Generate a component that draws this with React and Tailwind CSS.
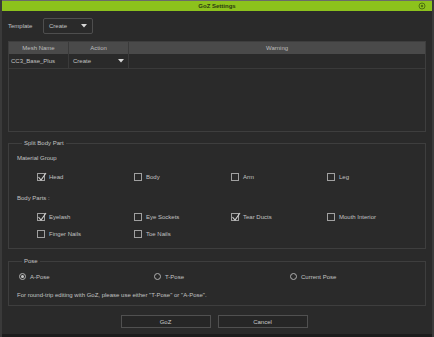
import React from "react";

const Check = ({ checked, label }) => (
  <div className="flex items-center gap-[4px]">
    <div className="relative w-[8px] h-[8px] border border-[#a0a0a0]">
      {checked && (
        <svg className="absolute -top-[2px] -left-[1px]" width="10" height="10" viewBox="0 0 10 10">
          <path d="M1.5 5 L4 8 L9 1" fill="none" stroke="#d0d0d0" strokeWidth="1.1" />
        </svg>
      )}
    </div>
    <span>{label}</span>
  </div>
);

const Radio = ({ checked, label }) => (
  <div className="flex items-center gap-[4px]">
    <div className="w-[7px] h-[7px] rounded-full border border-[#b0b0b0] flex items-center justify-center">
      {checked && <div className="w-[3px] h-[3px] rounded-full bg-[#c8c8c8]" />}
    </div>
    <span>{label}</span>
  </div>
);

const Select = ({ value, className }) => (
  <div className={`flex items-center justify-between ${className}`}>
    <span>{value}</span>
    <svg width="6" height="4" viewBox="0 0 6 4">
      <path d="M0 0 H6 L3 3.5 Z" fill="#d8d8d8" />
    </svg>
  </div>
);

export default function App() {
  return (
    <div
      className="w-[434px] h-[337px] bg-[#2a2a2a] flex flex-col text-[6px] leading-none text-[#c2c2c2] border-x-2 border-[#3a3a3a]"
      style={{ fontFamily: '"Liberation Sans", Arial, sans-serif' }}
    >
      {/* Title bar */}
      <div className="relative h-[11px] bg-[#8cc21c] border-t border-[#6a6a6a] flex items-center justify-center">
        <span className="font-bold text-[#2b3a10]">GoZ Settings</span>
        <svg className="absolute right-[6px] top-[1px]" width="8" height="8" viewBox="0 0 8 8">
          <circle cx="4" cy="4" r="3" fill="none" stroke="#4e7410" strokeWidth="1" />
          <circle cx="4" cy="4" r="1.2" fill="#4e7410" />
        </svg>
      </div>

      <div className="flex-1 flex flex-col px-[6px]">
        {/* Template */}
        <div className="mt-[7px] h-[16px] flex items-center">
          <span className="w-[35px]">Template</span>
          <Select
            value="Create"
            className="w-[50px] h-[16px] border border-[#4e4e4e] rounded-[2px] pl-[5px] pr-[5px]"
          />
        </div>

        {/* Mesh table */}
        <div className="mt-[7px] h-[91px] border border-[#3e3e3e] flex flex-col">
          <div className="h-[12px] bg-[#4a4a4a] grid grid-cols-[60px_60px_1fr] text-[#bdbdbd]">
            <div className="flex items-center justify-center border-r border-[#3a3a3a]">Mesh Name</div>
            <div className="flex items-center justify-center border-r border-[#3a3a3a]">Action</div>
            <div className="flex items-center justify-center">Warning</div>
          </div>
          <div className="h-[15px] grid grid-cols-[60px_60px_1fr] border-b border-[#3a3a3a]">
            <div className="flex items-center pl-[2px] border-r border-[#3a3a3a]">CC3_Base_Plus</div>
            <Select value="Create" className="pl-[4px] pr-[4px] border-r border-[#3a3a3a]" />
            <div />
          </div>
        </div>

        {/* Split Body Part */}
        <fieldset className="mt-[8px] h-[109px] border border-[#3e3e3e] px-[8px]">
          <legend className="px-[2px] ml-[5px] h-[7px]">Split Body Part</legend>
          <div className="mt-[8px]">Material Group</div>
          <div className="mt-[12px] grid grid-cols-[97px_97px_96px_1fr] pl-[20px]">
            <Check checked label="Head" />
            <Check label="Body" />
            <Check label="Arm" />
            <Check label="Leg" />
          </div>
          <div className="mt-[14px]">Body Parts :</div>
          <div className="mt-[12px] grid grid-cols-[97px_97px_96px_1fr] pl-[20px] gap-y-[9px]">
            <Check checked label="Eyelash" />
            <Check label="Eye Sockets" />
            <Check checked label="Tear Ducts" />
            <Check label="Mouth Interior" />
            <Check label="Finger Nails" />
            <Check label="Toe Nails" />
          </div>
        </fieldset>

        {/* Pose */}
        <fieldset className="mt-[9px] h-[48px] border border-[#3e3e3e] px-[8px]">
          <legend className="px-[2px] ml-[5px] h-[7px]">Pose</legend>
          <div className="mt-[8px] grid grid-cols-[135px_136px_1fr] pl-[2px]">
            <Radio checked label="A-Pose" />
            <Radio label="T-Pose" />
            <Radio label="Current Pose" />
          </div>
          <div className="mt-[12px]">
            For round-trip editing with GoZ, please use either "T-Pose" or "A-Pose".
          </div>
        </fieldset>

        {/* Buttons */}
        <div className="mt-[9px] flex justify-center gap-[7px] pr-[6px]">
          <button className="w-[90px] h-[13px] border border-[#505050] bg-[#262626] text-[#c8c8c8]">GoZ</button>
          <button className="w-[90px] h-[13px] border border-[#505050] bg-[#262626] text-[#c8c8c8]">Cancel</button>
        </div>
      </div>
      <div className="h-[3px] bg-[#1c1c1c]" />
    </div>
  );
}
